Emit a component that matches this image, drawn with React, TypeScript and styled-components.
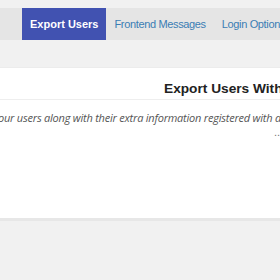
import React from "react";
import styled, { createGlobalStyle } from "styled-components";

const Global = createGlobalStyle`
  html, body { margin: 0; padding: 0; background: #f1f1f1; overflow: hidden; }
  body { font-family: "Liberation Sans", Arial, sans-serif; }
`;

const Page = styled.div`
  width: 280px;
  height: 280px;
  overflow: hidden;
  padding-top: 8px;
  box-sizing: border-box;
`;

const TabBar = styled.nav`
  display: flex;
  height: 32px;
  background: #e5e5e5;
  padding-left: 22px;
  white-space: nowrap;
  overflow: hidden;
`;

const Tab = styled.a<{ $active?: boolean }>`
  display: flex;
  align-items: center;
  padding: 0 8px;
  font-size: 11px;
  letter-spacing: ${(p) => (p.$active ? "0" : "-0.35px")};
  font-weight: ${(p) => (p.$active ? 700 : 400)};
  color: ${(p) => (p.$active ? "#ffffff" : "#3b7db4")};
  background: ${(p) => (p.$active ? "#4152b1" : "transparent")};
  text-decoration: none;
  flex-shrink: 0;
`;

const Panel = styled.section`
  margin-top: 27px;
  height: 150px;
  background: #ffffff;
  border-top: 1px solid #ececec;
  border-bottom: 3px solid #e7e7e7;
  overflow: hidden;
  white-space: nowrap;
`;

const Heading = styled.h2`
  margin: 0;
  padding: 13px 0 2px 164px;
  font-size: 13.7px;
  line-height: 16px;
  font-weight: 700;
  color: #222;
  border-bottom: 1px solid #eeeeee;
  overflow: hidden;
`;

const Intro = styled.p`
  margin: 0;
  padding-top: 10px;
  font-family: "Open Sans", sans-serif;
  font-style: italic;
  font-size: 11px;
  letter-spacing: -0.22px;
  line-height: 16px;
  color: #555;
  text-indent: -2px;
  overflow: hidden;
`;

const More = styled.div`
  text-align: right;
  padding-right: 0;
  font-size: 11px;
  line-height: 12px;
  color: #777;
`;

export default function App() {
  return (
    <>
      <Global />
      <Page>
        <TabBar>
          <Tab $active>Export Users</Tab>
          <Tab>Frontend Messages</Tab>
          <Tab>Login Options</Tab>
        </TabBar>
        <Panel>
          <Heading>Export Users With Extra Fields</Heading>
          <Intro>our users along with their extra information registered with a</Intro>
          <More>..</More>
        </Panel>
      </Page>
    </>
  );
}
